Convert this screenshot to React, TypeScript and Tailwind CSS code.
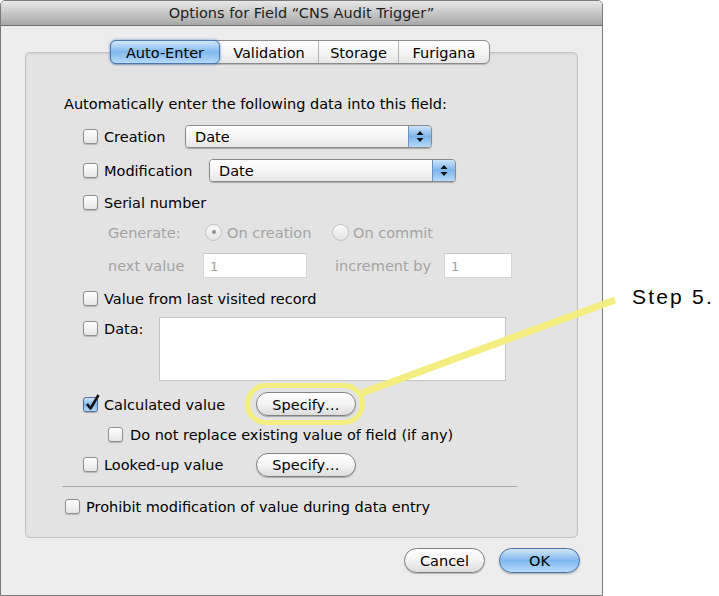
import React from "react";

function Checkbox({ checked = false }: { checked?: boolean }) {
	if (checked) {
		return (
			<span className="relative h-[15px] w-[15px] shrink-0 rounded-[3px] border border-[#4b6fa3] bg-gradient-to-b from-[#d2e6f9] via-[#7fb7ec] to-[#b4d8f7] shadow-[0_1px_1px_rgba(0,0,0,0.25)]">
				<svg
					className="absolute left-[1px] top-[-4px] overflow-visible"
					width="15"
					height="17"
					viewBox="0 0 15 17"
				>
					<path
						d="M2 10 L5.5 14.5 L13.5 1"
						fill="none"
						stroke="#111"
						strokeWidth="2.6"
						strokeLinejoin="round"
					/>
				</svg>
			</span>
		);
	}
	return (
		<span className="h-[15px] w-[15px] shrink-0 rounded-[3px] border border-[#8f8f8f] bg-gradient-to-b from-white to-[#e6e6e6] shadow-[0_1px_1px_rgba(0,0,0,0.2)]" />
	);
}

function Radio({ selected = false }: { selected?: boolean }) {
	return (
		<span className="flex h-[17px] w-[17px] shrink-0 items-center justify-center rounded-full border border-[#c2c2c2] bg-gradient-to-b from-[#fafafa] to-[#e4e4e4]">
			{selected && <span className="h-[4px] w-[4px] rounded-full bg-[#8c8c8c]" />}
		</span>
	);
}

function Popup() {
	return (
		<div className="flex h-[23px] w-[247px] overflow-hidden rounded-[4px] border border-[#8a8a8a] shadow-[0_1px_1px_rgba(0,0,0,0.25)]">
			<div className="flex flex-1 items-center bg-gradient-to-b from-white via-[#f6f6f6] to-[#e7e7e7] pl-[9px] pt-[3px]">
				Date
			</div>
			<div className="flex w-[23px] items-center justify-center border-l border-[#6c8fc0] bg-gradient-to-b from-[#cde3f9] via-[#7cb5ec] to-[#b6d9f8]">
				<svg width="8" height="13" viewBox="0 0 8 13">
					<path d="M4 1 L7.5 5 L0.5 5 Z" fill="#111" />
					<path d="M4 12 L7.5 8 L0.5 8 Z" fill="#111" />
				</svg>
			</div>
		</div>
	);
}

function Field({ width }: { width: string }) {
	return (
		<div
			className={`flex h-[25px] items-center border border-[#d6d6d6] border-t-[#c9c9c9] bg-white pl-[6px] pt-[2px] text-[13px] text-[#a0a0a0] ${width}`}
		>
			1
		</div>
	);
}

function PillButton({ label }: { label: string }) {
	return (
		<button
			type="button"
			className="flex h-[24px] w-[100px] items-center justify-center rounded-full border border-[#828282] bg-gradient-to-b from-white via-[#f4f4f4] to-[#dcdcdc] pt-[3px] shadow-[0_1px_1px_rgba(0,0,0,0.25)]"
		>
			{label}
		</button>
	);
}

export default function App() {
	return (
		<div className="relative flex h-[596px] w-[719px] overflow-hidden bg-white font-['DejaVu_Sans',sans-serif] text-[14.5px] text-black">
			{/* dialog window */}
			<div className="flex h-[596px] w-[603px] shrink-0 flex-col rounded-t-[5px] border border-[#7a7a7a] bg-[#ededed]">
				<div className="flex h-[25px] items-center justify-center rounded-t-[4px] border-b border-[#6f6f6f] bg-gradient-to-b from-[#e8e8e8] to-[#a8a8a8] pt-[2px] text-[#1e1e1e]">
					Options for Field “CNS Audit Trigger”
				</div>

				<div className="flex flex-col pl-[24px]">
					<div className="mt-[26px] flex h-[486px] w-[553px] flex-col rounded-[5px] border border-[#c3c3c3] bg-[#e3e3e3] shadow-[inset_0_1px_2px_rgba(0,0,0,0.08)]">
						{/* tabs */}
						<div className="-mt-[13px] flex pl-[84px]">
							<div className="flex h-[24px] rounded-[6px] border border-[#8b8b8b] bg-gradient-to-b from-white via-[#f5f5f5] to-[#e6e6e6] shadow-[0_1px_1px_rgba(0,0,0,0.2)]">
								<div className="z-10 -my-[1px] -ml-[1px] flex w-[110px] items-center justify-center rounded-[6px] border border-[#4f77ad] bg-gradient-to-b from-[#d3e7fa] via-[#80b9ee] to-[#b5d9f8] pt-[3px] shadow-[0_0_3px_rgba(60,120,210,0.8)]">
									Auto-Enter
								</div>
								<div className="flex w-[98px] items-center justify-center pt-[3px]">
									Validation
								</div>
								<div className="flex w-[80px] items-center justify-center border-l border-[#b3b3b3] pt-[3px]">
									Storage
								</div>
								<div className="flex w-[91px] items-center justify-center border-l border-[#b3b3b3] pt-[3px]">
									Furigana
								</div>
							</div>
						</div>

						<div className="flex flex-col pl-[38px]">
							<div className="mt-[28px] flex h-[22px] items-center pt-[3px]">
								Automatically enter the following data into this field:
							</div>

							<div className="ml-[19px] mt-[11px] flex h-[23px] items-center">
								<Checkbox />
								<span className="ml-[6px] w-[81px] pt-[3px]">Creation</span>
								<Popup />
							</div>

							<div className="ml-[19px] mt-[10px] flex h-[24px] items-center">
								<Checkbox />
								<span className="ml-[6px] w-[105px] pt-[3px]">Modification</span>
								<Popup />
							</div>

							<div className="ml-[19px] mt-[9px] flex h-[22px] items-center">
								<Checkbox />
								<span className="ml-[6px] pt-[3px]">Serial number</span>
							</div>

							<div className="ml-[44px] mt-[8px] flex h-[22px] items-center text-[#a3a3a3]">
								<span className="w-[97px] pt-[3px]">Generate:</span>
								<Radio selected />
								<span className="ml-[5px] w-[105px] pt-[3px]">On creation</span>
								<Radio />
								<span className="ml-[4px] pt-[3px]">On commit</span>
							</div>

							<div className="ml-[44px] mt-[10px] flex h-[25px] items-center text-[#a3a3a3]">
								<span className="w-[95px] pt-[3px]">next value</span>
								<Field width="w-[104px]" />
								<span className="ml-[28px] w-[109px] pt-[3px]">increment by</span>
								<Field width="w-[68px]" />
							</div>

							<div className="ml-[19px] mt-[9px] flex h-[22px] items-center">
								<Checkbox />
								<span className="ml-[6px] pt-[3px]">Value from last visited record</span>
							</div>

							<div className="ml-[19px] mt-[8px] flex h-[64px] items-start">
								<div className="flex h-[22px] items-center">
									<Checkbox />
									<span className="ml-[6px] w-[55px] pt-[3px]">Data:</span>
								</div>
								<div className="h-[64px] w-[347px] border border-[#c4c4c4] bg-white" />
							</div>

							<div className="ml-[19px] mt-[11px] flex h-[24px] items-center">
								<Checkbox checked />
								<span className="ml-[6px] w-[152px] pt-[3px]">Calculated value</span>
								<PillButton label="Specify…" />
							</div>

							<div className="ml-[44px] mt-[7px] flex h-[22px] items-center">
								<Checkbox />
								<span className="ml-[7px] pt-[3px]">
									Do not replace existing value of field (if any)
								</span>
							</div>

							<div className="ml-[19px] mt-[8px] flex h-[23px] items-center">
								<Checkbox />
								<span className="ml-[6px] w-[152px] pt-[3px]">Looked-up value</span>
								<PillButton label="Specify…" />
							</div>

							<div className="-ml-[2px] mt-[10px] h-px w-[455px] bg-[#a9a9a9]" />

							<div className="ml-[1px] mt-[8px] flex h-[22px] items-center">
								<Checkbox />
								<span className="ml-[6px] pt-[3px]">
									Prohibit modification of value during data entry
								</span>
							</div>
						</div>
					</div>

					<div className="mt-[10px] flex justify-end gap-[14px] pr-[22px]">
						<button
							type="button"
							className="flex h-[25px] w-[81px] items-center justify-center rounded-full border border-[#7f7f7f] bg-gradient-to-b from-white via-[#f4f4f4] to-[#dcdcdc] pt-[3px] shadow-[0_1px_1px_rgba(0,0,0,0.25)]"
						>
							Cancel
						</button>
						<button
							type="button"
							className="flex h-[25px] w-[81px] items-center justify-center rounded-full border border-[#4b72a8] bg-gradient-to-b from-[#d0e6fa] via-[#7fb8ee] to-[#b8dbf8] pt-[3px] shadow-[0_1px_2px_rgba(0,0,0,0.3)]"
						>
							OK
						</button>
					</div>
				</div>
			</div>

			{/* callout label */}
			<div className="ml-[29px] pt-[286px] font-['Liberation_Sans',Arial,sans-serif] text-[21px] leading-none tracking-[2.2px] text-black">
				Step 5.
			</div>

			{/* yellow highlight overlay */}
			<svg
				className="pointer-events-none absolute inset-0"
				width="719"
				height="596"
				viewBox="0 0 719 596"
			>
				<line
					x1="362"
					y1="393"
					x2="615"
					y2="300"
					stroke="#f4ed80"
					strokeWidth="7"
				/>
				<rect
					x="247.5"
					y="385.5"
					width="115"
					height="37"
					rx="18.5"
					fill="none"
					stroke="#f4ed80"
					strokeWidth="5"
				/>
			</svg>
		</div>
	);
}
